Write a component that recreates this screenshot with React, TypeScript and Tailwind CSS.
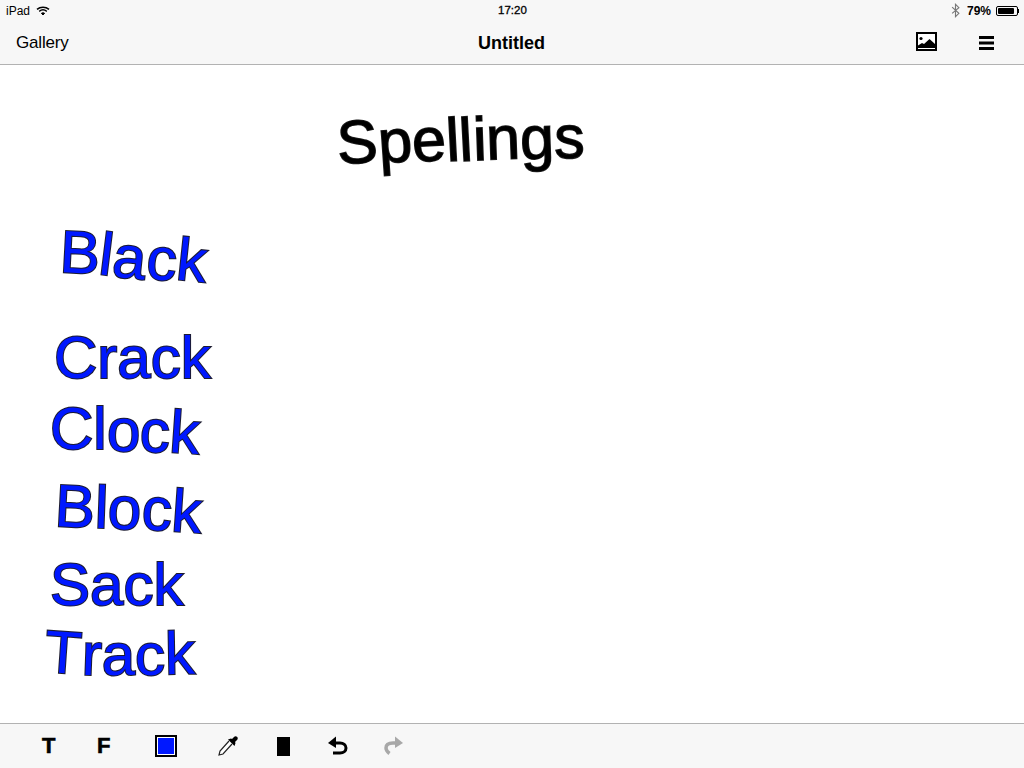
import React from 'react';

// letter tuning: [character, translateY, rotate, skewX]
type Glyph = [string, number, number, number];

const spellings: Glyph[] = [
  ['S', 2, -3, 0], ['p', 1, -4, 0], ['e', 0, -3, 0], ['l', 0, -3, 0], ['l', 0, -3, 0],
  ['i', -1, -2, 0], ['n', -2, -2, 0], ['g', -2, -2, 0], ['s', -3, 0, 0],
];

const words: { x: number; y: number; glyphs: Glyph[] }[] = [
  { x: 60, y: 218, glyphs: [['B', 0, 3, 0], ['l', 2, 7, 0], ['a', 5, 6, 0], ['c', 7, 5, 0], ['k', 8, 6, 0]] },
  { x: 54, y: 323, glyphs: [['C', 0, 0, 0], ['r', 0, 0, 0], ['a', 0, 0, 0], ['c', 0, 0, 0], ['k', 0, 0, 0]] },
  { x: 50, y: 394, glyphs: [['C', 0, 0, 0], ['l', 0, 0, 0], ['o', 2, 1, 0], ['c', 3, 2, 0], ['k', 4, 4, 0]] },
  { x: 55, y: 472, glyphs: [['B', 0, 3, 0], ['l', 1, 2, 0], ['o', 2, 2, 0], ['c', 3, 3, 0], ['k', 5, 4, 0]] },
  { x: 50, y: 550, glyphs: [['S', 0, 0, 0], ['a', 0, 0, 0], ['c', 0, 0, 0], ['k', 0, 0, 0]] },
  { x: 45, y: 618, glyphs: [['T', 0, 4, 0], ['r', 2, 2, 0], ['a', 2, 0, 0], ['c', 2, 0, 0], ['k', 1, -1, 0]] },
];

const Letters = ({ glyphs }: { glyphs: Glyph[] }) => (
  <>
    {glyphs.map(([ch, dy, rot, skew], i) => (
      <span key={i} className="inline-block" style={{ transform: `translateY(${dy}px) rotate(${rot}deg) skewX(${skew}deg)` }}>
        {ch}
      </span>
    ))}
  </>
);

const App: React.FC = () => {
  return (
    <div className="w-[1024px] h-[768px] flex flex-col bg-white overflow-hidden text-black font-['Liberation_Sans',Arial,sans-serif]">
      <header className="h-[65px] bg-[#f7f7f7] border-b border-[#b2b2b2] flex flex-col shrink-0">
        {/* status bar */}
        <div className="h-5 relative flex items-center justify-between pl-[6px] pr-[5px] pt-px text-[11.5px] leading-none">
          <div className="flex items-center gap-[6px]">
            <span className="text-[12px]">iPad</span>
            <svg width="14" height="10" viewBox="0 0 14 10" fill="none" stroke="#000">
              <path d="M1 3.4C4.4.4 9.6.4 13 3.4" strokeWidth="1.5" />
              <path d="M3.2 5.4c2.2-1.8 5.4-1.8 7.6 0" strokeWidth="1.4" />
              <path d="M5.4 7.3c.9-.7 2.300-.7 3.200 0L7 9z" fill="#000" strokeWidth="1" />
            </svg>
          </div>
          <span className="absolute left-[498px] top-[5px] text-[11.500px] [-webkit-text-stroke:0.3px_#000]">17:20</span>
          <div className="flex items-center">
            <svg width="9" height="15" viewBox="0 0 8 13" fill="none" stroke="#777" strokeWidth="1" className="mr-[7px]">
              <path d="M1 3.500l6 5.500-3 3V1l3 3-6 5" />
            </svg>
            <span className="mr-[5px] font-bold text-[12px]">79%</span>
            <div className="w-[22px] h-[10px] border border-black rounded-[2px] p-px">
              <div className="w-[16px] h-full bg-black rounded-[1px]" />
            </div>
            <div className="w-px h-[4px] bg-black" />
          </div>
        </div>
        {/* nav bar */}
        <div className="flex-1 relative flex items-center justify-between pl-4 pr-[30px] pb-px">
          <span className="text-[17px] mt-[3px] -tracking-[0.01em]">Gallery</span>
          <span className="absolute left-[478px] top-[12px] text-[18px] font-bold leading-[22px]">Untitled</span>
          <div className="flex items-start gap-[42px]">
            <svg width="21" height="19" viewBox="0 0 21 19">
              <rect x="1" y="1" width="19" height="17" fill="#fff" stroke="#000" strokeWidth="2" />
              <circle cx="5" cy="6.500" r="1.600" fill="#000" />
              <path d="M2 16v-2.500l4-2.500 2 1 5.500-5 5.500 5v4z" fill="#000" />
            </svg>
            <svg width="15" height="14" viewBox="0 0 15 14" fill="#000" className="mt-[4px]">
              <rect x="0" y="0" width="15" height="3" />
              <rect x="0" y="5.500" width="15" height="3" />
              <rect x="0" y="11" width="15" height="3" />
            </svg>
          </div>
        </div>
      </header>

      {/* free canvas with the drawn words */}
      <main className="flex-1 relative text-[60px] leading-[69px] [paint-order:stroke_fill] [-webkit-text-stroke:2px_#1c1c30]">
        <div className="absolute left-[337px] top-[41px] text-[61px] whitespace-nowrap text-black [-webkit-text-stroke:1.5px_#222]">
          <Letters glyphs={spellings} />
        </div>
        {words.map((w, i) => (
          <div key={i} className="absolute whitespace-nowrap text-[#0018ff]" style={{ left: w.x, top: w.y - 65 }}>
            <Letters glyphs={w.glyphs} />
          </div>
        ))}
      </main>

      {/* bottom toolbar */}
      <footer className="h-[45px] bg-[#f7f7f7] border-t border-[#b2b2b2] shrink-0 flex items-center pl-[42px]">
        <span className="w-[55px] text-[22px] leading-none font-bold [-webkit-text-stroke:0.6px_#000]">T</span>
        <span className="w-[58px] text-[22px] leading-none font-bold [-webkit-text-stroke:0.6px_#000]">F</span>
        <div className="w-[22px] h-[22px] border-2 border-black bg-white p-px mr-[39px]">
          <div className="w-full h-full bg-[#0018ff]" />
        </div>
        <svg width="24" height="24" viewBox="0 0 24 24" className="mr-[37px]">
          <path d="M13 7L4 17l-1 4 4-1 9-10" fill="#fff" stroke="#222" strokeWidth="1.200" />
          <path d="M12 5.500l6.500 6.500 1-3-.5-1 2-2c1-1 1-2.500 0-3.300s-2.200-.7-3 .3l-2 2-1-.5z" fill="#000" />
        </svg>
        <div className="w-[13px] h-[19px] bg-black mr-[37px]" />
        <svg width="22" height="20" viewBox="0 0 22 20" fill="none" stroke="#000" strokeWidth="3" className="mr-[33px]">
          <path d="M6 7h7c3.500 0 6 2 6 5s-2.500 5-6 5H6" />
          <path d="M9 .5L1 7l8 5z" fill="#000" stroke="none" />
        </svg>
        <svg width="22" height="20" viewBox="0 0 22 20" fill="none" stroke="#a8a8a8" strokeWidth="3.500">
          <path d="M15 7H11C6.500 7 4 9 4 12c0 2.500 1.500 4 3.500 5.500" />
          <path d="M13 .5L21 7l-8 5z" fill="#a8a8a8" stroke="none" />
        </svg>
      </footer>
    </div>
  );
};

export default App;
